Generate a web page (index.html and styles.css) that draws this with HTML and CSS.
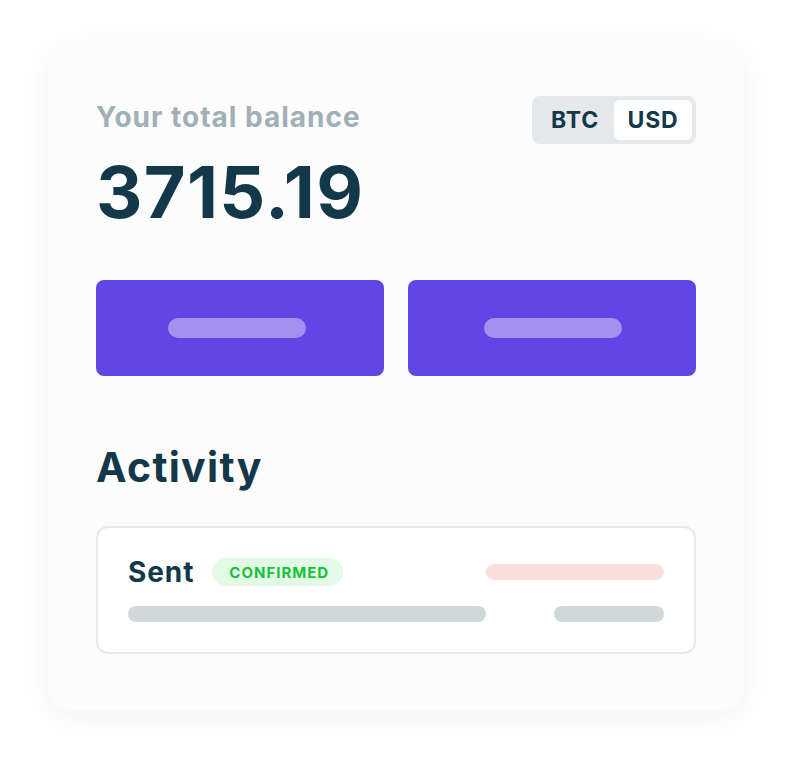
FILE: index.html
```html
<!DOCTYPE html>
<html>
<head>
<meta charset="utf-8">
<link rel="stylesheet" href="styles.css">
</head>
<body>
<div class="card">
  <div class="header">
    <div class="balance">
      <div class="label">Your total balance</div>
      <div class="amount">3715.19</div>
    </div>
    <div class="toggle">
      <span class="seg">BTC</span>
      <span class="seg active">USD</span>
    </div>
  </div>
  <div class="actions">
    <div class="btn"><span class="pill pill-left"></span></div>
    <div class="btn"><span class="pill pill-right"></span></div>
  </div>
  <h2 class="title">Activity</h2>
  <div class="tx">
    <div class="tx-row">
      <div class="tx-left">
        <span class="tx-type">Sent</span>
        <span class="badge">CONFIRMED</span>
      </div>
      <span class="bar red"></span>
    </div>
    <div class="tx-row">
      <span class="bar gray long"></span>
      <span class="bar gray short"></span>
    </div>
  </div>
</div>
</body>
</html>
```
FILE: styles.css
```css
html, body {
  margin: 0;
  padding: 0;
  background: #ffffff;
}
body {
  font-family: Inter, "Noto Sans", sans-serif;
  padding: 44px 48px 52px;
}
.card {
  width: 696px;
  height: 666px;
  box-sizing: border-box;
  padding: 52px 48px 56px;
  background: #fcfcfc;
  border-radius: 24px;
  box-shadow: 0 6px 36px rgba(20, 30, 40, 0.06);
}
.header {
  display: flex;
  justify-content: space-between;
  align-items: flex-start;
}
.label {
  font-size: 28px;
  line-height: 42px;
  font-weight: 700;
  letter-spacing: 1px;
  color: #a0b0b7;
}
.amount {
  margin-top: 10px;
  font-size: 72px;
  line-height: 88px;
  font-weight: 700;
  letter-spacing: 1.3px;
  color: #12384a;
}
.toggle {
  display: flex;
  background: #e5e9ec;
  border-radius: 8px;
  padding: 4px;
  height: 48px;
  box-sizing: border-box;
}
.seg {
  width: 78px;
  display: flex;
  align-items: center;
  justify-content: center;
  font-size: 23px;
  font-weight: 700;
  letter-spacing: 0.8px;
  color: #12384a;
  border-radius: 6px;
}
.seg.active {
  background: #ffffff;
}
.actions {
  display: flex;
  gap: 24px;
  margin-top: 44px;
}
.btn {
  flex: 1;
  height: 96px;
  background: #6145e5;
  border-radius: 8px;
  display: flex;
  align-items: center;
  justify-content: center;
}
.pill {
  width: 138px;
  height: 20px;
  border-radius: 10px;
  background: #a291ee;
}
.pill-left {
  margin-right: 6px;
}
.pill-right {
  margin-left: 2px;
}
.title {
  margin: 66px 0 0;
  font-size: 41px;
  line-height: 50px;
  font-weight: 700;
  letter-spacing: 1.3px;
  color: #12384a;
}
.tx {
  margin-top: 34px;
  border: 2px solid #e5e9ec;
  border-radius: 12px;
  background: #ffffff;
  padding: 30px;
  display: flex;
  flex-direction: column;
  gap: 20px;
}
.tx-row {
  display: flex;
  justify-content: space-between;
  align-items: center;
}
.tx-left {
  display: flex;
  align-items: center;
  gap: 18px;
}
.tx-type {
  font-size: 28px;
  line-height: 28px;
  font-weight: 700;
  letter-spacing: 0.9px;
  color: #12384a;
}
.badge {
  background: #e3fae6;
  color: #18c23a;
  font-size: 15px;
  font-weight: 700;
  letter-spacing: 1px;
  border-radius: 14px;
  padding: 0 14px 0 17px;
  height: 28px;
  display: flex;
  align-items: center;
}
.bar {
  height: 16px;
  border-radius: 8px;
}
.bar.red {
  width: 178px;
  background: #fbdfdc;
}
.bar.gray {
  background: #d0d8da;
}
.bar.long {
  width: 358px;
}
.bar.short {
  width: 110px;
}
```
